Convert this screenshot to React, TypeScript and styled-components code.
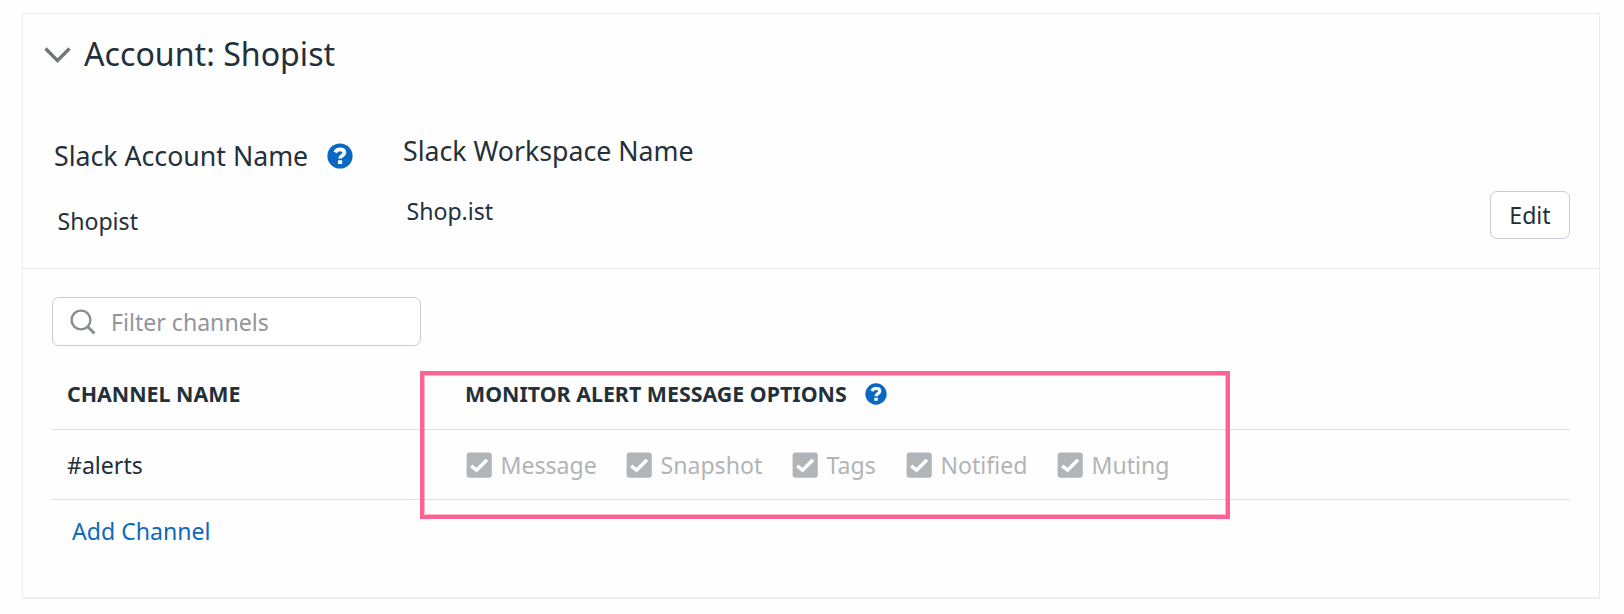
import React from "react";
import styled, { createGlobalStyle } from "styled-components";

const GlobalStyle = createGlobalStyle`
  *, *::before, *::after { box-sizing: border-box; }
  body {
    margin: 0;
    background: #fff;
    color: #23303a;
    font-family: "Noto Sans", "Open Sans", sans-serif;
  }
`;

const Page = styled.main`
  width: 1624px;
  height: 614px;
  padding: 13px 0 0 22px;
  background: #fefefe;
`;

const Card = styled.section`
  display: flex;
  flex-direction: column;
  width: 1578px;
  height: 586px;
  border: 1px solid #ededee;
  border-bottom-width: 2px;
  border-bottom-color: #f0f0f0;
  background: #fefefe;
`;

const CardHeader = styled.header`
  display: flex;
  align-items: center;
  height: 81px;
  padding-left: 21px;
`;

const Title = styled.h2`
  margin: 0 0 2px 13px;
  font-size: 32.15px;
  font-weight: 400;
  line-height: 44px;
  white-space: nowrap;
`;

const AccountSection = styled.div`
  display: flex;
  height: 174px;
  padding: 0 29px 0 31px;
  border-bottom: 1px solid #e6e8ea;
`;

const Field = styled.div<{ $width?: number; $offset?: number }>`
  display: flex;
  flex-direction: column;
  width: ${(p) => p.$width ?? 400}px;
  padding-top: ${(p) => p.$offset ?? 0}px;
`;

const FieldLabel = styled.div`
  display: flex;
  align-items: center;
  gap: 19px;
  height: 36px;
  font-size: 26.7px;
  line-height: 36px;
  white-space: nowrap;
`;

const FieldValue = styled.div<{ $gap: number }>`
  margin-top: ${(p) => p.$gap}px;
  padding-left: 3.5px;
  font-size: 23.1px;
  line-height: 32px;
  white-space: nowrap;
`;

const EditButton = styled.button`
  width: 80px;
  height: 48px;
  margin: 96px 0 0 auto;
  padding: 0;
  border: 1px solid #c9c9d3;
  border-radius: 7px;
  background: #fff;
  color: inherit;
  font: inherit;
  font-size: 23.1px;
  line-height: 46px;
`;

const ChannelSection = styled.div`
  padding: 28px 29px 0 29px;
`;

const SearchBox = styled.label`
  display: flex;
  align-items: center;
  gap: 15px;
  width: 369px;
  height: 49px;
  padding-left: 17px;
  border: 1px solid #c9c9cf;
  border-radius: 7px;
  background: #fff;
`;

const SearchInput = styled.input`
  flex: 1;
  min-width: 0;
  padding: 0;
  border: 0;
  outline: 0;
  background: none;
  color: #23303a;
  font: inherit;
  font-size: 23.1px;
  line-height: 32px;
  &::placeholder { color: #93959b; opacity: 1; }
`;

const TableArea = styled.div`
  position: relative;
  margin-top: 12px;
`;

const Row = styled.div<{ $height: number }>`
  display: grid;
  grid-template-columns: 398px 1fr;
  align-items: center;
  height: ${(p) => p.$height}px;
  padding-left: 15px;
  border-bottom: 1px solid #dfe0e1;
  font-size: 23.1px;
  line-height: 32px;
  white-space: nowrap;
`;

const HeadCell = styled.div`
  display: flex;
  align-items: center;
  gap: 18px;
  font-size: 21.38px;
  font-weight: 700;
`;

const Options = styled.div`
  display: flex;
  padding-left: 1px;
`;

const Option = styled.label<{ $width: number }>`
  display: flex;
  align-items: center;
  gap: 8.5px;
  width: ${(p) => p.$width}px;
  color: #b2b4b6;
`;

const Highlight = styled.div`
  position: absolute;
  left: 368px;
  top: 13px;
  width: 810px;
  height: 148px;
  border: 4px solid #ff6192;
  box-shadow: inset 0 0 0 1px rgba(255, 97, 146, 0.45);
  pointer-events: none;
`;

const AddLink = styled.a`
  display: inline-block;
  margin: 15px 0 0 20px;
  color: #0f69b8;
  font-size: 23.1px;
  line-height: 32px;
  text-decoration: none;
`;

const Icon = styled.svg`
  display: block;
  flex: none;
`;

const HelpIcon = ({ size }: { size: number }) => (
  <Icon width={size} height={size} viewBox="0 0 26 26" fill="none">
    <circle cx="13" cy="13" r="12.6" fill="#0868c2" />
    <path
      d="M8.200 9.400C9.200 7.300 11 6.300 13 6.300c2.600 0 4.400 1.300 4.400 3.400 0 2.800-4.300 2.900-4.300 5.900"
      stroke="#fff"
      strokeWidth="3.800"
    />
    <rect x="11" y="17.300" width="4.200" height="3.800" rx=".5" fill="#fff" />
  </Icon>
);

const ChevronIcon = () => (
  <Icon width="27" height="18" viewBox="0 0 27 18" fill="none">
    <path d="M1.500 2.500 13.500 14.700 25.500 2.500" stroke="#72757a" strokeWidth="3.400" />
  </Icon>
);

const SearchIcon = () => (
  <Icon width="26" height="26" viewBox="0 0 26 26" fill="none" stroke="#8b8d94" strokeWidth="2.400">
    <circle cx="11" cy="11" r="9.400" />
    <path d="M17.500 17.500 24.500 24.500" strokeWidth="3" />
  </Icon>
);

const CheckIcon = () => (
  <Icon width="26" height="26" viewBox="0 0 26 26" fill="none">
    <rect x=".6" y=".6" width="25.200" height="25.200" rx="3" fill="#afb5b8" />
    <path d="M5.200 13.800 10.600 18.200 21 7.800" stroke="#fff" strokeWidth="3.500" />
  </Icon>
);

const options = [
  { label: "Message", width: 160 },
  { label: "Snapshot", width: 166 },
  { label: "Tags", width: 114 },
  { label: "Notified", width: 151 },
  { label: "Muting", width: 120 },
];

export default function App() {
  return (
    <Page>
      <GlobalStyle />
      <Card>
        <CardHeader>
          <ChevronIcon />
          <Title>Account: Shopist</Title>
        </CardHeader>
        <AccountSection>
          <Field $width={349} $offset={43}>
            <FieldLabel>
              Slack Account Name
              <HelpIcon size={26} />
            </FieldLabel>
            <FieldValue $gap={31}>Shopist</FieldValue>
          </Field>
          <Field $offset={38}>
            <FieldLabel>Slack Workspace Name</FieldLabel>
            <FieldValue $gap={26}>Shop.ist</FieldValue>
          </Field>
          <EditButton type="button">Edit</EditButton>
        </AccountSection>
        <ChannelSection>
          <SearchBox>
            <SearchIcon />
            <SearchInput placeholder="Filter channels" />
          </SearchBox>
          <TableArea>
            <Row $height={72}>
              <HeadCell>CHANNEL NAME</HeadCell>
              <HeadCell>
                MONITOR ALERT MESSAGE OPTIONS
                <HelpIcon size={22} />
              </HeadCell>
            </Row>
            <Row $height={70}>
              <span>#alerts</span>
              <Options>
                {options.map((o) => (
                  <Option key={o.label} $width={o.width}>
                    <CheckIcon />
                    {o.label}
                  </Option>
                ))}
              </Options>
            </Row>
            <Highlight />
          </TableArea>
          <AddLink>Add Channel</AddLink>
        </ChannelSection>
      </Card>
    </Page>
  );
}
